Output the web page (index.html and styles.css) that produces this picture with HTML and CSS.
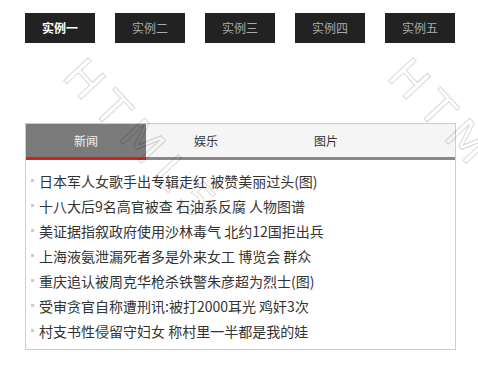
FILE: index.html
```html
<!DOCTYPE html>
<html>
<head>
<meta charset="utf-8">
<title>选项卡</title>
<link rel="stylesheet" href="styles.css">
</head>
<body>
<div class="btns">
  <a class="btn on">实例一</a>
  <a class="btn">实例二</a>
  <a class="btn">实例三</a>
  <a class="btn">实例四</a>
  <a class="btn">实例五</a>
</div>

<div class="tabbox">
  <div class="tabhead">
    <span class="tab on">新闻</span>
    <span class="tab">娱乐</span>
    <span class="tab">图片</span>
  </div>
  <ul class="news">
    <li>日本军人女歌手出专辑走红 被赞美丽过头(图)</li>
    <li>十八大后9名高官被查 石油系反腐 人物图谱</li>
    <li>美证据指叙政府使用沙林毒气 北约12国拒出兵</li>
    <li>上海液氨泄漏死者多是外来女工 博览会 群众</li>
    <li>重庆追认被周克华枪杀铁警朱彦超为烈士(图)</li>
    <li>受审贪官自称遭刑讯:被打2000耳光 鸡奸3次</li>
    <li>村支书性侵留守妇女 称村里一半都是我的娃</li>
  </ul>
</div>

<span class="mark mark1">HTML5</span>
<span class="mark mark2">HTML5</span>
</body>
</html>
```

FILE: styles.css
```css
body {
  margin: 0;
  padding: 13px 0 0 25px;
  font-family: "Noto Sans CJK SC", "Noto Sans", sans-serif;
  background: #fff;
  position: relative;
  height: 360px;
  overflow: hidden;
}

.btns {
  display: flex;
  gap: 20px;
}

.btn {
  width: 70px;
  height: 30px;
  line-height: 30px;
  text-align: center;
  font-size: 12px;
  background: #222;
  color: #aaa;
  text-decoration: none;
}

.btn.on {
  color: #fff;
  font-weight: bold;
}

.tabbox {
  margin-top: 80px;
  width: 429px;
  border: 1px solid #ccc;
}

.tabhead {
  display: flex;
  background: #f5f5f5;
  border-bottom: 3px solid #888;
}

.tab {
  width: 120px;
  height: 33px;
  line-height: 33px;
  text-align: center;
  font-size: 12px;
  color: #333;
}

.tab.on {
  background: #7a7a7a;
  color: #f2f2f2;
  box-shadow: 0 3px 0 #d21f1f;
}

.news {
  list-style: none;
  margin: 0;
  padding: 8px 0 6px;
}

.news li {
  display: flex;
  align-items: center;
  gap: 5px;
  height: 25px;
  padding-left: 5px;
  font-size: 14px;
  color: #333;
}

.news li::before {
  content: "";
  width: 3px;
  height: 3px;
  background: #ccc;
}

.mark {
  position: absolute;
  font-family: "DejaVu Sans", sans-serif;
  font-size: 46px;
  letter-spacing: 10px;
  color: transparent;
  -webkit-text-stroke: 1px rgba(0, 0, 0, 0.18);
  transform: rotate(47deg);
  transform-origin: 0 0;
  pointer-events: none;
}

.mark1 {
  left: 92px;
  top: 48px;
}

.mark2 {
  left: 417px;
  top: 48px;
}
```
